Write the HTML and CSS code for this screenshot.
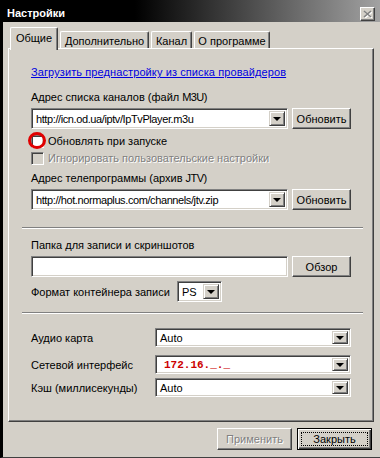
FILE: index.html
```html
<!DOCTYPE html>
<html>
<head>
<meta charset="utf-8">
<title>Настройки</title>
<link rel="stylesheet" href="styles.css">
</head>
<body>
<div class="window">
	<div class="titlebar">
		<span class="title">Настройки</span>
		<span class="close">
			<svg width="9" height="8" viewBox="0 0 9 8">
				<path d="M1 1 L8 7 M8 1 L1 7" stroke="#ffffff" stroke-width="1.6" transform="translate(1,1)"/>
				<path d="M1 1 L8 7 M8 1 L1 7" stroke="#808080" stroke-width="1.6"/>
			</svg>
		</span>
	</div>

	<div class="tabs">
		<span class="tab active" style="width:48px">Общие</span>
		<span class="tab" style="width:89px">Дополнительно</span>
		<span class="tab" style="width:41px">Канал</span>
		<span class="tab" style="width:76px">О программе</span>
	</div>

	<div class="panel">
		<a class="link" href="#">Загрузить преднастройку из списка провайдеров</a>

		<div class="label l1">Адрес списка каналов (файл <span class="lat">M3U</span>)</div>
		<div class="row r1">
			<div class="combo"><span class="value url">http://icn.od.ua/iptv/IpTvPlayer.m3u</span><span class="drop"></span></div>
			<span class="btn side">Обновить</span>
		</div>

		<div class="check c1">
			<span class="box"></span>Обновлять при запуске
			<span class="mark"></span>
		</div>
		<div class="check c2 disabled">
			<span class="box"></span>Игнорировать пользовательские настройки
		</div>

		<div class="label l2">Адрес телепрограммы (архив <span class="lat">JTV</span>)</div>
		<div class="row r2">
			<div class="combo"><span class="value url">http://hot.normaplus.com/channels/jtv.zip</span><span class="drop"></span></div>
			<span class="btn side">Обновить</span>
		</div>

		<div class="sep s1"></div>

		<div class="label l3">Папка для записи и скриншотов</div>
		<div class="row r3">
			<div class="field"></div>
			<span class="btn side">Обзор</span>
		</div>

		<div class="row r4">
			<span class="rlabel">Формат контейнера записи</span>
			<div class="combo small"><span class="value">PS</span><span class="drop"></span></div>
		</div>

		<div class="sep s2"></div>

		<div class="row r5">
			<span class="dlabel">Аудио карта</span>
			<div class="combo low"><span class="value">Auto</span><span class="drop"></span></div>
		</div>
		<div class="row r6">
			<span class="dlabel">Сетевой интерфейс</span>
			<div class="combo low"><span class="value ip">172.16._._</span><span class="drop"></span></div>
		</div>
		<div class="row r7">
			<span class="dlabel">Кэш (миллисекунды)</span>
			<div class="combo low"><span class="value">Auto</span><span class="drop"></span></div>
		</div>
	</div>

	<div class="footer">
		<span class="btn off">Применить</span>
		<span class="btn default"><span class="focus">Закрыть</span></span>
	</div>
</div>
</body>
</html>
```

FILE: styles.css
```css
*{ margin:0; padding:0; box-sizing:border-box;}
body{ background:#d4d0c8; font:11px "Liberation Sans", Arial, sans-serif; color:#000;}

.window{ width:380px; height:458px; background:#d4d0c8; border-left:3px solid #000; border-bottom:1px solid #404040; display:flex; flex-direction:column;}

.titlebar{ height:22px; display:flex; align-items:flex-start; justify-content:space-between; padding:7px 5px 0 4px; background:linear-gradient(to right, #000 0%, #000 35%, #a2a2a2 100%);}
.title{ color:#fff; font-weight:bold; line-height:13px;}
.close{ width:15px; height:14px; display:flex; align-items:center; justify-content:center; background:#d4d0c8; border:1px solid; border-color:#fff #404040 #404040 #fff; box-shadow:inset -1px -1px #808080;}

.tabs{ height:21px; margin-top:5px; padding-left:7px; display:flex; align-items:flex-end; gap:2px;}
.tab{ height:17px; display:flex; align-items:center; justify-content:center; padding-top:1px; border:1px solid; border-bottom:none; border-color:#fff #404040 #404040 #fff; border-radius:2px 2px 0 0; box-shadow:inset -1px 0 #808080; background:#d4d0c8;}
.tab.active{ height:23px; margin-bottom:-2px; padding-bottom:4px; position:relative; z-index:1;}

.panel{ width:366px; height:374px; margin-left:5px; padding:16px 22px 0 22px; display:flex; flex-direction:column; border:1px solid; border-color:#fff #404040 #404040 #fff; box-shadow:inset -1px -1px #808080;}

.link{ height:14px; line-height:14px; color:#0000e0; text-decoration:underline; align-self:flex-start; letter-spacing:0.1px;}
.label{ height:14px; line-height:14px;}
.lat{ letter-spacing:-0.6px;}
.l1{ margin-top:11px;}
.l2{ margin-top:6px;}
.l3{ margin-top:9px;}

.row{ display:flex; align-items:center; gap:4px; height:21px;}
.r1, .r2, .r3, .r4{ margin-top:4px;}
.r5{ margin-top:14px; height:19px;}
.r6{ margin-top:8px; height:19px;}
.r7{ margin-top:4px; height:19px;}

.combo, .field{ width:257px; height:21px; display:flex; align-items:center; background:#fff; border:1px solid; border-color:#808080 #fff #fff #808080; box-shadow:inset 1px 1px #404040, inset -1px -1px #d4d0c8; padding:2px;}
.combo .value{ flex:1; padding-left:2px; white-space:nowrap; overflow:hidden;}
.combo .url{ letter-spacing:-0.4px;}
.combo .drop{ width:16px; height:100%; display:flex; align-items:center; justify-content:center; background:#d4d0c8; border:1px solid; border-color:#d4d0c8 #404040 #404040 #d4d0c8; box-shadow:inset 1px 1px #fff, inset -1px -1px #808080;}
.combo .drop::after{ content:""; border-left:4px solid transparent; border-right:4px solid transparent; border-top:4px solid #000;}
.combo.small{ width:45px; margin-left:auto; margin-right:129px;}
.combo.low{ width:196px; height:19px; margin-left:auto;}
.combo .ip{ color:#cc0000; font:bold 11px "Liberation Mono", "Courier New", monospace; padding-left:6px;}

.rlabel{ line-height:14px;}
.dlabel{ line-height:14px;}

.btn{ height:21px; display:flex; align-items:center; justify-content:center; background:#d4d0c8; border:1px solid; border-color:#fff #404040 #404040 #fff; box-shadow:inset -1px -1px #808080;}
.btn.side{ width:59px;}

.check{ display:flex; align-items:center; gap:4px; height:14px; position:relative;}
.c1{ margin-top:5px;}
.c2{ margin-top:3px;}
.check .box{ width:13px; height:13px; background:#fff; border:1px solid; border-color:#808080 #fff #fff #808080; box-shadow:inset 1px 1px #404040, inset -1px -1px #d4d0c8;}
.check.disabled{ color:#808080; text-shadow:1px 1px #fff;}
.check.disabled .box{ background:#d4d0c8;}
.check .mark{ position:absolute; left:-3px; top:-2px; width:18px; height:17px; border:3px solid #e00000; border-radius:50%;}

.sep{ height:2px; width:341px; margin-left:-9px; border-top:1px solid #808080; border-bottom:1px solid #fff;}
.s1{ margin-top:17px;}
.s2{ margin-top:10px;}

.footer{ display:flex; justify-content:flex-end; gap:5px; margin-top:6px; padding-right:8px;}
.footer .btn{ width:75px; height:22px;}
.btn.off{ color:#808080; text-shadow:1px 1px #fff;}
.btn.default{ border:1px solid #000; box-shadow:inset 1px 1px #fff, inset -1px -1px #404040, inset -2px -2px #808080; padding:3px;}
.focus{ width:100%; height:100%; display:flex; align-items:center; justify-content:center; border:1px dotted #000;}
```
